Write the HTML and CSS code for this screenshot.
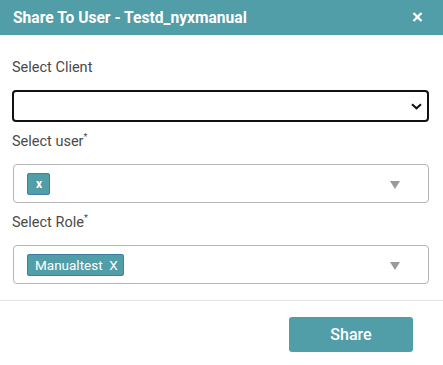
FILE: index.html
```html
<!DOCTYPE html>
<html lang="en">
<head>
  <meta charset="UTF-8" />
  <title>Share To User</title>
  <link rel="stylesheet" href="styles.css">
</head>
<body>
  <!-- Modal header -->
  <div class="modal-header">
    <span class="modal-title">Share To User - Testd_nyxmanual</span>
    <svg class="close" width="11" height="10" viewBox="0 0 11 10">
      <path d="M1.5 1 L9.5 9 M9.5 1 L1.5 9" stroke="#fff" stroke-width="2.4" />
    </svg>
  </div>

  <!-- Form -->
  <div class="modal-body">
    <label class="field-label">Select Client</label>
    <div class="select-box">
      <svg width="11" height="7" viewBox="0 0 11 7">
        <path d="M1 1.2 L5.5 5.3 L10 1.2" fill="none" stroke="#111" stroke-width="2" />
      </svg>
    </div>

    <label class="field-label">Select user<sup>*</sup></label>
    <div class="multi-box">
      <div class="chips">
        <span class="chip chip-small">x</span>
      </div>
      <span class="caret"></span>
    </div>

    <label class="field-label">Select Role<sup>*</sup></label>
    <div class="multi-box">
      <div class="chips">
        <span class="chip">Manualtest&nbsp; X</span>
      </div>
      <span class="caret"></span>
    </div>
  </div>

  <div class="modal-footer">
    <button class="share-btn">Share</button>
  </div>
</body>
</html>
```

FILE: styles.css
```css
body {
  margin: 0;
  padding: 0;
  font-family: Roboto, "Liberation Sans", sans-serif;
  background: #fff;
}
.modal-header {
  background-color: #519ea8;
  height: 35px;
  padding: 0 20px 0 13px;
  display: flex;
  align-items: center;
  justify-content: space-between;
}
.modal-title {
  color: #fff;
  font-size: 15.6px;
  font-weight: bold;
}
.close {
  display: block;
  margin-top: -1px;
}
.modal-body {
  padding: 23px 14px 0 12px;
  display: flex;
  flex-direction: column;
}
.field-label {
  display: block;
  font-size: 14.5px;
  line-height: 20px;
  color: #4a4a4a;
  margin-bottom: 12px;
}
.field-label sup {
  font-size: 9px;
  line-height: 0;
  vertical-align: 6px;
}
.select-box {
  height: 32px;
  box-sizing: border-box;
  border: 2px solid #111;
  border-radius: 4px;
  display: flex;
  align-items: center;
  justify-content: flex-end;
  padding-right: 5px;
  margin-bottom: 10px;
}
.select-box svg {
  display: block;
}
.multi-box {
  height: 39px;
  box-sizing: border-box;
  margin-left: 1px;
  border: 1px solid #b5b5b5;
  border-radius: 4px;
  display: flex;
  align-items: center;
  justify-content: space-between;
  padding: 0 28px 0 13px;
  margin-bottom: 10px;
}
.chips {
  display: flex;
  gap: 4px;
}
.chip {
  background-color: #519ea8;
  border: 1px solid #3c7fa6;
  border-radius: 2px;
  color: #fff;
  font-size: 13.5px;
  line-height: 20px;
  padding: 0 5px 0 7px;
}
.chip-small {
  font-size: 12px;
  font-weight: bold;
  padding: 0 7px 0 8px;
}
.caret {
  width: 0;
  height: 0;
  border-left: 5px solid transparent;
  border-right: 5px solid transparent;
  border-top: 8px solid #9a9a9a;
  margin-top: 2px;
}
.modal-footer {
  margin-top: 6px;
  border-top: 1px solid #e2e2e2;
  padding: 16px 30px 0 0;
  display: flex;
  justify-content: flex-end;
}
.share-btn {
  width: 124px;
  height: 35px;
  border: none;
  border-radius: 3px;
  background-color: #519ea8;
  color: #fff;
  font-family: Roboto, "Liberation Sans", sans-serif;
  font-size: 16px;
  font-weight: 500;
  cursor: pointer;
}
```
